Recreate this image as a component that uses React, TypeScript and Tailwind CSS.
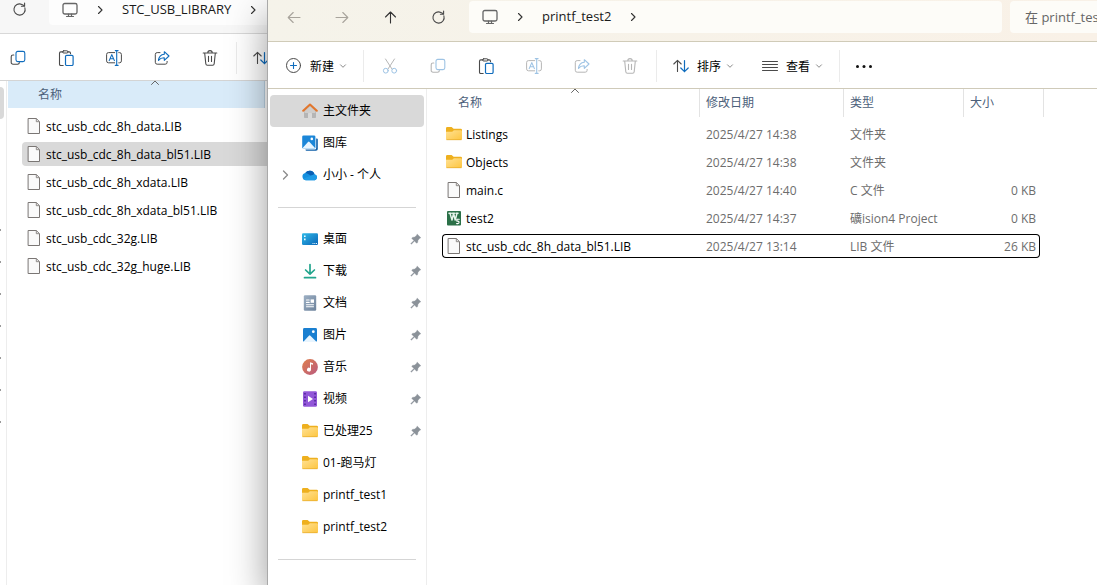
import type { ReactNode } from 'react';

type IconProps = { className?: string };

const DARK = '#4a4a4a';
const BLUE = '#0f6cbd';

function Svg({ children, size = 16, className = '' }: { children: ReactNode; size?: number; className?: string }) {
  return (
    <svg
      width={size}
      height={size}
      viewBox={`0 0 ${size} ${size}`}
      fill="none"
      strokeLinecap="round"
      strokeLinejoin="round"
      className={`shrink-0 ${className}`}
      aria-hidden="true"
    >
      {children}
    </svg>
  );
}

/* ---------- Line icons ---------- */

const BackIcon = () => (
  <Svg><path d="M14 8.5H2.2M7.2 3.5l-5 5 5 5" stroke="#a8a49c" strokeWidth="1.1" /></Svg>
);
const ForwardIcon = () => (
  <Svg><path d="M2 8.5h11.8M8.8 3.5l5 5-5 5" stroke="#a8a49c" strokeWidth="1.1" /></Svg>
);
const UpIcon = () => (
  <Svg><path d="M8.5 14V3M3.5 8l5-5 5 5" stroke="#333" strokeWidth="1.1" /></Svg>
);
const RefreshIcon = () => (
  <Svg>
    <path d="M13.9 6.9A5.6 5.6 0 1 1 10.8 3.4l2.6 1.3" stroke={DARK} strokeWidth="1.1" />
    <path d="M13.6 2v3.2h-3.2" stroke={DARK} strokeWidth="1.1" />
  </Svg>
);
const MonitorIcon = () => (
  <Svg>
    <rect x="1" y="1.5" width="14" height="10.5" rx="1.8" stroke="#666" strokeWidth="1.3" />
    <path d="M6.5 12v2.3M9.5 12v2.3M4.5 14.5h7" stroke="#666" strokeWidth="1.2" />
  </Svg>
);
const CrumbChevron = () => (
  <Svg size={10}><path d="M3.5 1.5 7 5 3.5 8.5" stroke="#333" strokeWidth="1.1" /></Svg>
);
const DownChevron = () => (
  <Svg size={10}><path d="M2.5 3.8 5 6.3l2.5-2.5" stroke="#8a8a8a" /></Svg>
);
const SortCaret = ({ className }: IconProps) => (
  <Svg size={10} className={className}><path d="M1.5 6.5 5 3l3.5 3.5" stroke="#666" /></Svg>
);

const PlusIcon = () => (
  <Svg>
    <circle cx="7.5" cy="7.5" r="7" stroke={DARK} />
    <path d="M7.5 4.5v6M4.5 7.5h6" stroke={BLUE} strokeWidth="1.1" />
  </Svg>
);
const CutIcon = () => (
  <Svg>
    <path d="M3.5 1 10 11M12.5 1 6 11" stroke={DARK} />
    <circle cx="3.8" cy="12.7" r="2.4" stroke={BLUE} />
    <circle cx="12.2" cy="12.7" r="2.4" stroke={BLUE} />
  </Svg>
);
const CopyIcon = () => (
  <Svg>
    <path d="M3.8 5H3a1.8 1.8 0 0 0-1.8 1.8v5.6A1.8 1.8 0 0 0 3 14.2h4.6a1.8 1.8 0 0 0 1.8-1.6" stroke={DARK} strokeWidth="1.1" />
    <rect x="6" y="1.4" width="8.8" height="10.2" rx="1.8" stroke={BLUE} strokeWidth="1.1" />
  </Svg>
);
const PasteIcon = () => (
  <Svg>
    <path d="M5 1.9H2.8A1.3 1.3 0 0 0 1.5 3.2v11a1.3 1.3 0 0 0 1.3 1.3h2.4M9.7 1.9h1.5a1.3 1.3 0 0 1 1.3 1.3v.6" stroke={DARK} strokeWidth="1.1" />
    <rect x="4.6" y=".8" width="5.4" height="2.2" rx="1.1" stroke={DARK} />
    <rect x="7.5" y="5.4" width="7.6" height="10.1" rx="1.2" stroke={BLUE} strokeWidth="1.2" />
  </Svg>
);
const RenameIcon = () => (
  <Svg>
    <path d="M8.7 2.6H2.5A1.9 1.9 0 0 0 .6 4.5v6.4a1.9 1.9 0 0 0 1.9 1.9h6.2M12.8 2.6h.7a1.9 1.9 0 0 1 1.9 1.9v6.4a1.9 1.9 0 0 1-1.9 1.9h-.7" stroke={DARK} />
    <path d="M10.7 .8v14.4M9.3.6h2.8M9.3 15.4h2.8" stroke={BLUE} strokeWidth="1.1" />
    <path d="M3.2 10.6 5.8 4.6l2.6 6M4.1 8.8h3.4" stroke={BLUE} strokeWidth="1.1" />
  </Svg>
);
const ShareIcon = () => (
  <Svg>
    <path d="M6 2.6H3.2A1.9 1.9 0 0 0 1.3 4.5v7.8a1.9 1.9 0 0 0 1.9 1.9h8a1.9 1.9 0 0 0 1.9-1.9v-.9" stroke={DARK} />
    <path d="M10.3 1.7 15 6l-4.7 4.3V7.8c-2.5-.1-4.3.7-5.8 2.7.3-3.5 2.3-6 5.8-6.3V1.7Z" stroke={BLUE} strokeWidth="1.1" />
  </Svg>
);
const TrashIcon = () => (
  <Svg>
    <path d="M1.2 3h13.6M5.8 2.8a2.2 2.2 0 0 1 4.4 0M2.7 3.2l1.1 10.6a1.6 1.6 0 0 0 1.6 1.4h5.2a1.6 1.6 0 0 0 1.6-1.4l1.1-10.6M6.5 6.3v5.2M9.5 6.3v5.2" stroke={DARK} strokeWidth="1.1" />
  </Svg>
);
const SortIcon = () => (
  <Svg>
    <path d="M4.5 13.5V2.3M.8 6l3.7-3.7L8.2 6" stroke={DARK} strokeWidth="1.1" />
    <path d="M11.5 2.5v11.2M7.8 10l3.7 3.7 3.7-3.7" stroke={BLUE} strokeWidth="1.2" />
  </Svg>
);
const ViewIcon = () => (
  <Svg><path d="M.5 3.5h15M.5 6.5h15M.5 9.5h15M.5 12.5h15" stroke={DARK} /></Svg>
);
const MoreIcon = () => (
  <Svg size={18}>
    <circle cx="2.5" cy="9.5" r="1.5" fill="#111" />
    <circle cx="9" cy="9.5" r="1.5" fill="#111" />
    <circle cx="15.5" cy="9.5" r="1.5" fill="#111" />
  </Svg>
);
const PinIcon = () => (
  <Svg size={12}>
    <path d="M7.3 1.2 10.8 4.7 9.8 5.3 8 7.2 7.6 9.6 6.6 10.2 4.5 8.1 1.4 11.2.8 10.6 3.9 7.5 1.8 5.4 2.4 4.4 4.8 4 6.7 2.2Z" fill="#8b9299" stroke="#8b9299" strokeWidth=".4" />
  </Svg>
);

/* ---------- Colour icons ---------- */

const HomeIcon = () => (
  <Svg>
    <path d="M2 7.5 8 2.2l6 5.3v6.8a.8.8 0 0 1-.8.8H10v-4.3a1 1 0 0 0-1-1H7a1 1 0 0 0-1 1v4.3H2.8a.8.8 0 0 1-.8-.8Z" fill="#b5b5b5" />
    <path d="M2.6 8 8 3l5.4 5v2H2.6Z" fill="#cfcdcb" />
    <path d="M1.2 7.8 8 1.5l6.8 6.3" stroke="#e2762c" strokeWidth="2" />
  </Svg>
);
const GalleryIcon = () => (
  <Svg>
    <path d="M14.2 3.5h.6a1 1 0 0 1 1 1V14a1.8 1.8 0 0 1-1.8 1.8H4.5a1 1 0 0 1-1-1v-.4h9.2a1.5 1.5 0 0 0 1.5-1.5Z" fill="#0d5ea8" />
    <rect x=".2" y=".4" width="13.2" height="13.2" rx="1.4" fill="#1b86d8" />
    <path d="m.6 13 5.4-6a1 1 0 0 1 1.5 0l5.5 6a1.2 1.2 0 0 1-.8.6H1.5a1.2 1.2 0 0 1-.9-.6Z" fill="#e8f5ff" />
    <circle cx="9.8" cy="3.9" r="1.3" fill="#fff" />
  </Svg>
);
const CloudIcon = () => (
  <Svg>
    <path d="M3.7 13.2a3.6 3.6 0 0 1-.4-7.1 5.1 5.1 0 0 1 9.2 1.1A3.1 3.1 0 0 1 12.9 13.2Z" fill="#1490df" />
    <path d="M3.3 6.1a5.1 5.1 0 0 1 9.2 1.1L9 8.7 5.3 6.4a4 4 0 0 0-2-.3Z" fill="#0a5fb4" />
    <path d="m1.2 11.8 11.3-4.6a3.1 3.1 0 0 1 .4 6H3.7a3.5 3.5 0 0 1-2.5-1.4Z" fill="#1f9be6" />
  </Svg>
);
const DesktopIcon = () => (
  <Svg>
    <defs>
      <linearGradient id="desk" x1="0" y1="0" x2="1" y2="1">
        <stop stopColor="#2fb9e8" />
        <stop offset="1" stopColor="#0a66b8" />
      </linearGradient>
    </defs>
    <rect y="2.2" width="16" height="11.8" rx="1.2" fill="url(#desk)" />
    <path d="M2 4.4h1.6V6H2zM2 7.6h1.6v1.6H2zM10.5 12h1v1h-1zM12.3 12h1v1h-1zM14 12h1v1h-1z" fill="#e9fbff" />
  </Svg>
);
const DownloadIcon = () => (
  <Svg><path d="M8 1.5v9.3M3.6 7 8 11.2 12.4 7M2.5 14.7h11" stroke="#23a58d" strokeWidth="1.7" /></Svg>
);
const DocumentIcon = () => (
  <Svg>
    <defs>
      <linearGradient id="doc" x1="0" y1="0" x2="1" y2="1">
        <stop stopColor="#9db0c4" />
        <stop offset="1" stopColor="#6d829b" />
      </linearGradient>
    </defs>
    <rect x="1.8" y=".3" width="12.4" height="15.4" rx="1.2" fill="url(#doc)" />
    <path d="M4.5 5h2.7M4.5 7.4h2.7M4.5 9.7h7M4.5 11.8h7" stroke="#fff" strokeWidth="1.1" />
    <rect x="8.6" y="4.4" width="3.4" height="3.4" fill="#fff" />
  </Svg>
);
const PictureIcon = () => (
  <Svg>
    <rect x="1" y="1" width="14" height="14" rx="1.4" fill="#1a7fd0" />
    <path d="m1.6 14.4 5.3-5.7a1 1 0 0 1 1.5 0l5.8 5.7a1.4 1.4 0 0 1-.8.6H2.4a1.4 1.4 0 0 1-.8-.6Z" fill="#e8f5ff" />
    <circle cx="11.3" cy="4.7" r="1.4" fill="#fff" />
  </Svg>
);
const MusicIcon = () => (
  <Svg>
    <defs>
      <linearGradient id="music" x1="0" y1="0" x2="1" y2="1">
        <stop stopColor="#e0804c" />
        <stop offset="1" stopColor="#b95a80" />
      </linearGradient>
    </defs>
    <circle cx="8" cy="8" r="7.9" fill="url(#music)" />
    <path d="M8 3.2 11 4.3v1.5L9 5.3v5.2a2 2 0 1 1-1-1.6Z" fill="#fff" />
  </Svg>
);
const VideoIcon = () => (
  <Svg>
    <rect x="1" y=".2" width="14" height="15.6" rx="1.4" fill="#9257d8" />
    <path d="M2.2 2.7h1.5M2.2 6.2h1.5M2.2 9.8h1.5M2.2 13.3h1.5M12.3 2.7h1.5M12.3 6.2h1.5M12.3 9.8h1.5M12.3 13.3h1.5" stroke="#4b2294" strokeWidth="1.5" strokeLinecap="butt" />
    <path d="M6 4.8v6.4L11 8Z" fill="#fff" />
  </Svg>
);
const FolderIcon = () => (
  <Svg>
    <defs>
      <linearGradient id="folder" x1="0" y1="0" x2="1" y2="1">
        <stop stopColor="#ffe194" />
        <stop offset="1" stopColor="#fdc53f" />
      </linearGradient>
    </defs>
    <path d="M0 2.3A1.3 1.3 0 0 1 1.3 1h4.3l2 1.7h7A1.3 1.3 0 0 1 16 4v4H0Z" fill="#eeb01f" />
    <path d="M0 5.8h6.2l1.7-1.5h6.9A1.2 1.2 0 0 1 16 5.5v7.3a1.2 1.2 0 0 1-1.2 1.2H1.2A1.2 1.2 0 0 1 0 12.8Z" fill="url(#folder)" />
    <path d="M.8 13.7h14.4" stroke="#e6ab2a" strokeWidth=".7" />
  </Svg>
);
const FileIcon = () => (
  <Svg>
    <path d="M2.5.5h7.8l3.2 3.2v11.8h-11Z" fill="#fafafa" stroke="#7a7674" />
    <path d="M10.3.8v2.9h2.9" stroke="#8d8987" />
  </Svg>
);
const KeilIcon = () => (
  <Svg>
    <rect x="1" y="1" width="14" height="14.5" rx="1" fill="#2b7048" />
    <path d="M3 3.2h2.2M6.5 3.2h2M10 3.2h2M4 3.4l2 6.6 1.6-6.6 1.6 6.6 1.8-6.6" stroke="#e6f3ea" strokeWidth="1.5" />
    <path d="M13.3 9.2h-2.5v1.9h1.1c1.6 0 1.6 2.5 0 2.5h-1.3" stroke="#fff" strokeWidth="1.1" />
  </Svg>
);

/* ---------- Shared pieces ---------- */

function ToolButton({ label, disabled, children }: { label: string; disabled?: boolean; children: ReactNode }) {
  return (
    <button
      type="button"
      aria-label={label}
      disabled={disabled}
      className="flex h-8 w-12 shrink-0 items-center justify-center disabled:opacity-40"
    >
      {children}
    </button>
  );
}

function MenuButton({ label, icon }: { label: string; icon: ReactNode }) {
  return (
    <button type="button" className="flex h-8 shrink-0 items-center">
      {icon}
      <span className="ml-2 pt-0.5 text-black">{label}</span>
      <span className="ml-1"><DownChevron /></span>
    </button>
  );
}

const Separator = () => <div className="h-8 w-px shrink-0 bg-[#ebebeb]" />;

/* ---------- Background window ---------- */

const libraryFiles = [
  'stc_usb_cdc_8h_data.LIB',
  'stc_usb_cdc_8h_data_bl51.LIB',
  'stc_usb_cdc_8h_xdata.LIB',
  'stc_usb_cdc_8h_xdata_bl51.LIB',
  'stc_usb_cdc_32g.LIB',
  'stc_usb_cdc_32g_huge.LIB',
];
const selectedLibrary = 'stc_usb_cdc_8h_data_bl51.LIB';

function LibraryWindow() {
  return (
    <section className="flex w-[267px] shrink-0 flex-col overflow-hidden bg-white">
      <header className="flex h-[34px] shrink-0 items-start border-b border-[#d8d8d8] bg-[#f7f7f7]">
        <button type="button" aria-label="刷新" className="flex h-[18px] w-[38px] shrink-0 items-center justify-center">
          <RefreshIcon />
        </button>
        <div className="ml-[11px] flex h-[25px] flex-1 items-center rounded-bl bg-[#fdfdfd] pb-1.5 pl-[13px] text-[13px]">
          <MonitorIcon />
          <span className="ml-[17px]"><CrumbChevron /></span>
          <span className="ml-[17px]">STC_USB_LIBRARY</span>
          <span className="ml-[17px]"><CrumbChevron /></span>
        </div>
      </header>

      <div className="flex h-[47px] shrink-0 items-center border-b border-[#d4d4d4] pt-0.5">
        <div className="-ml-1.5 flex items-center">
          <ToolButton label="复制"><CopyIcon /></ToolButton>
          <ToolButton label="粘贴"><PasteIcon /></ToolButton>
          <ToolButton label="重命名"><RenameIcon /></ToolButton>
          <ToolButton label="共享"><ShareIcon /></ToolButton>
          <ToolButton label="删除"><TrashIcon /></ToolButton>
          <div className="mr-4 ml-0.5"><Separator /></div>
          <button type="button" aria-label="排序"><SortIcon /></button>
        </div>
      </div>

      <div className="flex flex-1">
        {/* Right edge of the navigation pane */}
        <div className="w-[7px] shrink-0 border-r border-[#ededed] pt-1.5">
          <div className="h-8 w-1 rounded-r bg-[#d9d9d9]" />
          <div className="mt-24">
            {[0, 1, 2, 3, 4, 5, 6].map((n) => (
              <div key={n} className="flex h-8 items-center pb-0.5">
                <div className="h-0.5 w-px bg-[#9a9a9a]" />
              </div>
            ))}
          </div>
        </div>
        <div className="min-w-0 flex-1 pl-px">
          <table className="w-full table-fixed border-collapse text-left">
            <thead>
              <tr>
                <th className="h-[31px] p-0 align-top font-normal">
                  <div className="relative mr-0.5 h-[27px] border-r border-[#bcd3e4] bg-[#d9ebf9] pl-[30px] leading-[27px] text-[#4c607a]">
                    名称
                    <SortCaret className="absolute top-[-3px] left-[142px]" />
                  </div>
                </th>
              </tr>
            </thead>
            <tbody>
              {libraryFiles.map((name) => (
                <tr key={name}>
                  <td className="h-7 p-0 pl-[14px]">
                    <div className={`flex h-6 items-center rounded-l-sm pl-1 ${name === selectedLibrary ? 'bg-[#d9d9d9]' : ''}`}>
                      <FileIcon />
                      <span className="ml-1 pt-0.5 whitespace-nowrap text-black">{name}</span>
                    </div>
                  </td>
                </tr>
              ))}
            </tbody>
          </table>
        </div>
      </div>
    </section>
  );
}

/* ---------- Foreground window ---------- */

type NavEntry = { label: string; icon: ReactNode; pinned?: boolean; active?: boolean; expandable?: boolean };

const topEntries: NavEntry[] = [
  { label: '主文件夹', icon: <HomeIcon />, active: true },
  { label: '图库', icon: <GalleryIcon /> },
  { label: '小小 - 个人', icon: <CloudIcon />, expandable: true },
];

const quickEntries: NavEntry[] = [
  { label: '桌面', icon: <DesktopIcon />, pinned: true },
  { label: '下载', icon: <DownloadIcon />, pinned: true },
  { label: '文档', icon: <DocumentIcon />, pinned: true },
  { label: '图片', icon: <PictureIcon />, pinned: true },
  { label: '音乐', icon: <MusicIcon />, pinned: true },
  { label: '视频', icon: <VideoIcon />, pinned: true },
  { label: '已处理25', icon: <FolderIcon />, pinned: true },
  { label: '01-跑马灯', icon: <FolderIcon /> },
  { label: 'printf_test1', icon: <FolderIcon /> },
  { label: 'printf_test2', icon: <FolderIcon /> },
];

function NavList({ entries }: { entries: NavEntry[] }) {
  return (
    <ul>
      {entries.map((e) => (
        <li key={e.label}>
          <a href="#" className={`flex h-8 items-center rounded-sm pr-0.5 ${e.active ? 'bg-[#d9d9d9]' : ''}`}>
            <span className="flex w-8 shrink-0 justify-center">
              {e.expandable && (
                <Svg size={10}><path d="M2.5 1 6.5 5l-4 4" stroke="#8a8a8a" strokeWidth="1.3" /></Svg>
              )}
            </span>
            {e.icon}
            <span className="ml-[5px] flex-1 whitespace-nowrap">{e.label}</span>
            {e.pinned && <PinIcon />}
          </a>
        </li>
      ))}
    </ul>
  );
}

const NavDivider = () => (
  <div className="flex h-8 items-center pr-2 pl-2">
    <div className="h-px w-full bg-[#d5d5d5]" />
  </div>
);

const files = [
  { name: 'Listings', date: '2025/4/27 14:38', type: '文件夹', size: '', icon: <FolderIcon /> },
  { name: 'Objects', date: '2025/4/27 14:38', type: '文件夹', size: '', icon: <FolderIcon /> },
  { name: 'main.c', date: '2025/4/27 14:40', type: 'C 文件', size: '0 KB', icon: <FileIcon /> },
  { name: 'test2', date: '2025/4/27 14:37', type: '礦ision4 Project', size: '0 KB', icon: <KeilIcon /> },
  { name: 'stc_usb_cdc_8h_data_bl51.LIB', date: '2025/4/27 13:14', type: 'LIB 文件', size: '26 KB', icon: <FileIcon />, focused: true },
];

const columns = [
  { label: '名称', width: 'w-[258px]', pad: 'pl-4' },
  { label: '修改日期', width: 'w-36', pad: 'pl-1.5' },
  { label: '类型', width: 'w-[120px]', pad: 'pl-1.5' },
  { label: '大小', width: 'w-20', pad: 'pl-1.5' },
];

function FileTable() {
  return (
    <table className="w-[602px] table-fixed border-collapse text-left">
      <thead>
        <tr>
          {columns.map((c, i) => (
            <th key={c.label} className={`h-[31px] p-0 align-top font-normal ${c.width}`}>
              <div className={`relative h-7 border-r border-[#e3e3e3] leading-7 text-[#4c607a] ${c.pad}`}>
                {c.label}
                {i === 0 && <SortCaret className="absolute top-[-3px] left-32" />}
              </div>
            </th>
          ))}
        </tr>
      </thead>
      <tbody>
        {files.map((f) => {
          const edge = f.focused ? 'border-black' : 'border-transparent';
          return (
            <tr key={f.name} className="text-[#6d6d6d]">
              <td className="h-7 p-0">
                <div className={`flex h-6 items-center rounded-l-sm border-y border-l pl-[3px] text-black ${edge}`}>
                  {f.icon}
                  <span className="ml-1 pt-0.5 whitespace-nowrap">{f.name}</span>
                </div>
              </td>
              <td className="p-0">
                <div className={`flex h-6 items-center border-y pt-0.5 pl-1.5 ${edge}`}>{f.date}</div>
              </td>
              <td className="p-0">
                <div className={`flex h-6 items-center border-y pt-0.5 pl-1.5 whitespace-nowrap ${edge}`}>{f.type}</div>
              </td>
              <td className="p-0 pr-1">
                <div className={`flex h-6 items-center justify-end rounded-r-sm border-y border-r pt-0.5 pr-[3px] ${edge}`}>{f.size}</div>
              </td>
            </tr>
          );
        })}
      </tbody>
    </table>
  );
}

function ProjectWindow() {
  return (
    <section className="relative flex min-w-0 flex-1 flex-col border-l border-[#a9a9a9] bg-white shadow-[0_14px_36px_rgba(0,0,0,0.4)]">
      <header className="flex h-[42px] shrink-0 items-start border-b border-[#d0cbb8] bg-linear-to-r from-[#f5f3ea] to-[#f9f1e7] pt-px">
        <nav className="flex h-8 items-center pl-0.5" aria-label="导航">
          <ToolButton label="后退"><BackIcon /></ToolButton>
          <ToolButton label="前进"><ForwardIcon /></ToolButton>
          <ToolButton label="向上"><UpIcon /></ToolButton>
          <ToolButton label="刷新"><RefreshIcon /></ToolButton>
        </nav>
        <div className="ml-[7px] flex h-8 min-w-0 flex-1 items-center rounded bg-[#fdfcf8] pl-[13px] text-[13px]">
          <MonitorIcon />
          <span className="ml-[17px]"><CrumbChevron /></span>
          <span className="ml-[17px]">printf_test2</span>
          <span className="ml-[17px]"><CrumbChevron /></span>
        </div>
        <input
          type="text"
          aria-label="搜索"
          placeholder="在 printf_test2 中搜索"
          className="ml-2 h-8 w-[87px] shrink-0 rounded-l bg-[#fdfcf8] pl-[15px] text-[13px] outline-none placeholder:text-[#666]"
        />
      </header>

      <div className="flex h-[47px] shrink-0 items-center border-b border-[#cfcab9] pt-0.5 pl-[18px]">
        <MenuButton label="新建" icon={<PlusIcon />} />
        <div className="mr-0.5 ml-[15px]"><Separator /></div>
        <ToolButton label="剪切" disabled><CutIcon /></ToolButton>
        <ToolButton label="复制" disabled><CopyIcon /></ToolButton>
        <ToolButton label="粘贴"><PasteIcon /></ToolButton>
        <ToolButton label="重命名" disabled><RenameIcon /></ToolButton>
        <ToolButton label="共享" disabled><ShareIcon /></ToolButton>
        <ToolButton label="删除" disabled><TrashIcon /></ToolButton>
        <div className="mr-4 ml-0.5"><Separator /></div>
        <MenuButton label="排序" icon={<SortIcon />} />
        <div className="ml-[27px]"><MenuButton label="查看" icon={<ViewIcon />} /></div>
        <div className="ml-[15px]"><Separator /></div>
        <ToolButton label="更多"><MoreIcon /></ToolButton>
      </div>

      <div className="flex flex-1">
        <nav className="w-[159px] shrink-0 border-r border-[#ededed] pt-1.5 pr-0.5 pl-0.5 text-black" aria-label="文件夹">
          <NavList entries={topEntries} />
          <NavDivider />
          <NavList entries={quickEntries} />
          <NavDivider />
        </nav>
        <main className="min-w-0 flex-1 overflow-hidden pl-[15px]">
          <FileTable />
        </main>
      </div>
    </section>
  );
}

export default function App() {
  return (
    <div className="flex min-h-screen overflow-hidden bg-white font-['Open_Sans','Noto_Sans_CJK_SC',sans-serif] text-xs text-[#1a1a1a]">
      <LibraryWindow />
      <ProjectWindow />
    </div>
  );
}
